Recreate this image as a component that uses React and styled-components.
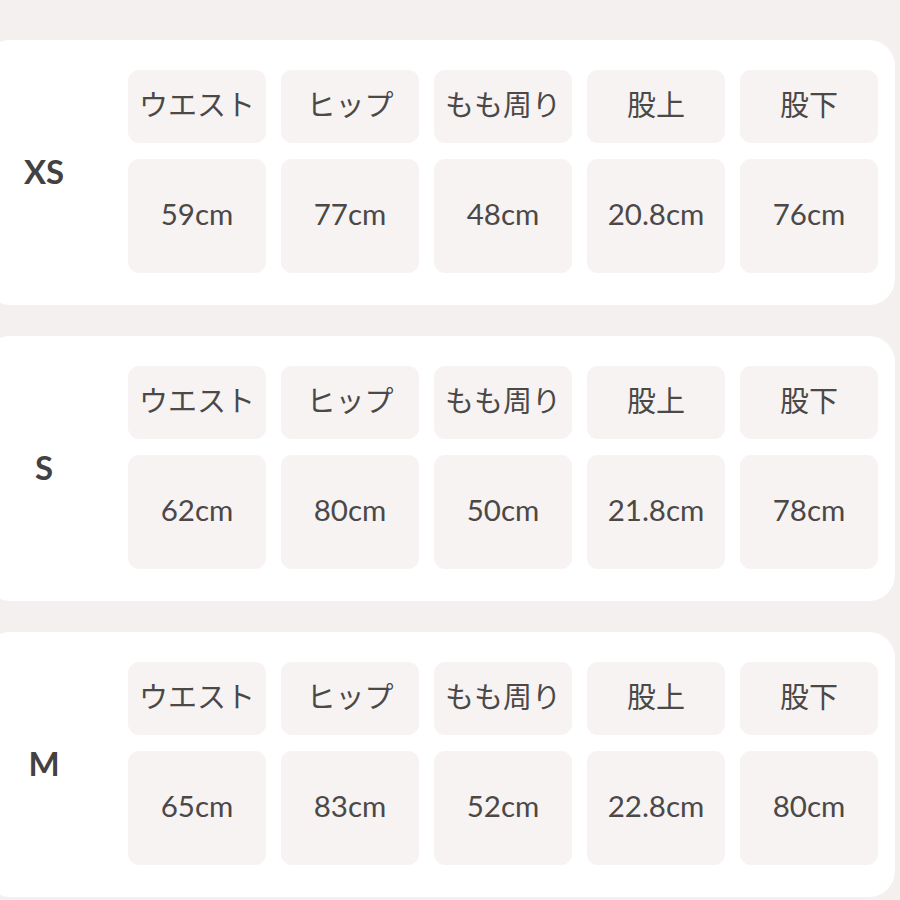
import React from "react";
import styled, { createGlobalStyle } from "styled-components";

const GlobalStyle = createGlobalStyle`
  html, body {
    margin: 0;
    padding: 0;
    background: #f4f0ef;
  }
  body {
    font-family: Lato, "Noto Sans CJK JP", sans-serif;
    color: #4b4848;
  }
`;

const headers = ["ウエスト", "ヒップ", "もも周り", "股上", "股下"];

const sizes = [
  { name: "XS", values: ["59cm", "77cm", "48cm", "20.8cm", "76cm"] },
  { name: "S", values: ["62cm", "80cm", "50cm", "21.8cm", "78cm"] },
  { name: "M", values: ["65cm", "83cm", "52cm", "22.8cm", "80cm"] },
];

const Page = styled.div`
  width: 900px;
  height: 900px;
  overflow: hidden;
  padding: 40px 5px 0 0;
  box-sizing: border-box;
  display: flex;
  flex-direction: column;
  gap: 31px;
`;

const Card = styled.section`
  margin-left: -16px;
  background: #ffffff;
  border-radius: 26px;
  height: 265px;
  box-sizing: border-box;
  padding: 30px 17px 32px 0;
  display: flex;
  align-items: center;
  gap: 24px;
`;

const SizeLabel = styled.div`
  width: 120px;
  text-align: center;
  font-family: Lato, sans-serif;
  font-weight: 700;
  font-size: 33px;
  color: #434141;
  padding-bottom: 2px;
`;

const Table = styled.div`
  display: grid;
  grid-template-columns: repeat(5, 138px);
  grid-template-rows: 73px 114px;
  column-gap: 15px;
  row-gap: 16px;
`;

const Cell = styled.div`
  background: #f7f3f2;
  border-radius: 11px;
  display: flex;
  align-items: center;
  justify-content: center;
  font-size: ${(p) => (p.$head ? "29px" : "29.5px")};
  font-family: ${(p) =>
    p.$head ? '"Noto Sans CJK JP", sans-serif' : "Lato, sans-serif"};
  font-weight: 400;
  color: #4b4848;
  padding-bottom: ${(p) => (p.$head ? "7px" : "5px")};
`;

export default function App() {
  return (
    <>
      <GlobalStyle />
      <Page>
        {sizes.map((s) => (
          <Card key={s.name}>
            <SizeLabel>{s.name}</SizeLabel>
            <Table>
              {headers.map((h) => (
                <Cell $head key={h}>
                  {h}
                </Cell>
              ))}
              {s.values.map((v, i) => (
                <Cell key={i}>{v}</Cell>
              ))}
            </Table>
          </Card>
        ))}
      </Page>
    </>
  );
}
